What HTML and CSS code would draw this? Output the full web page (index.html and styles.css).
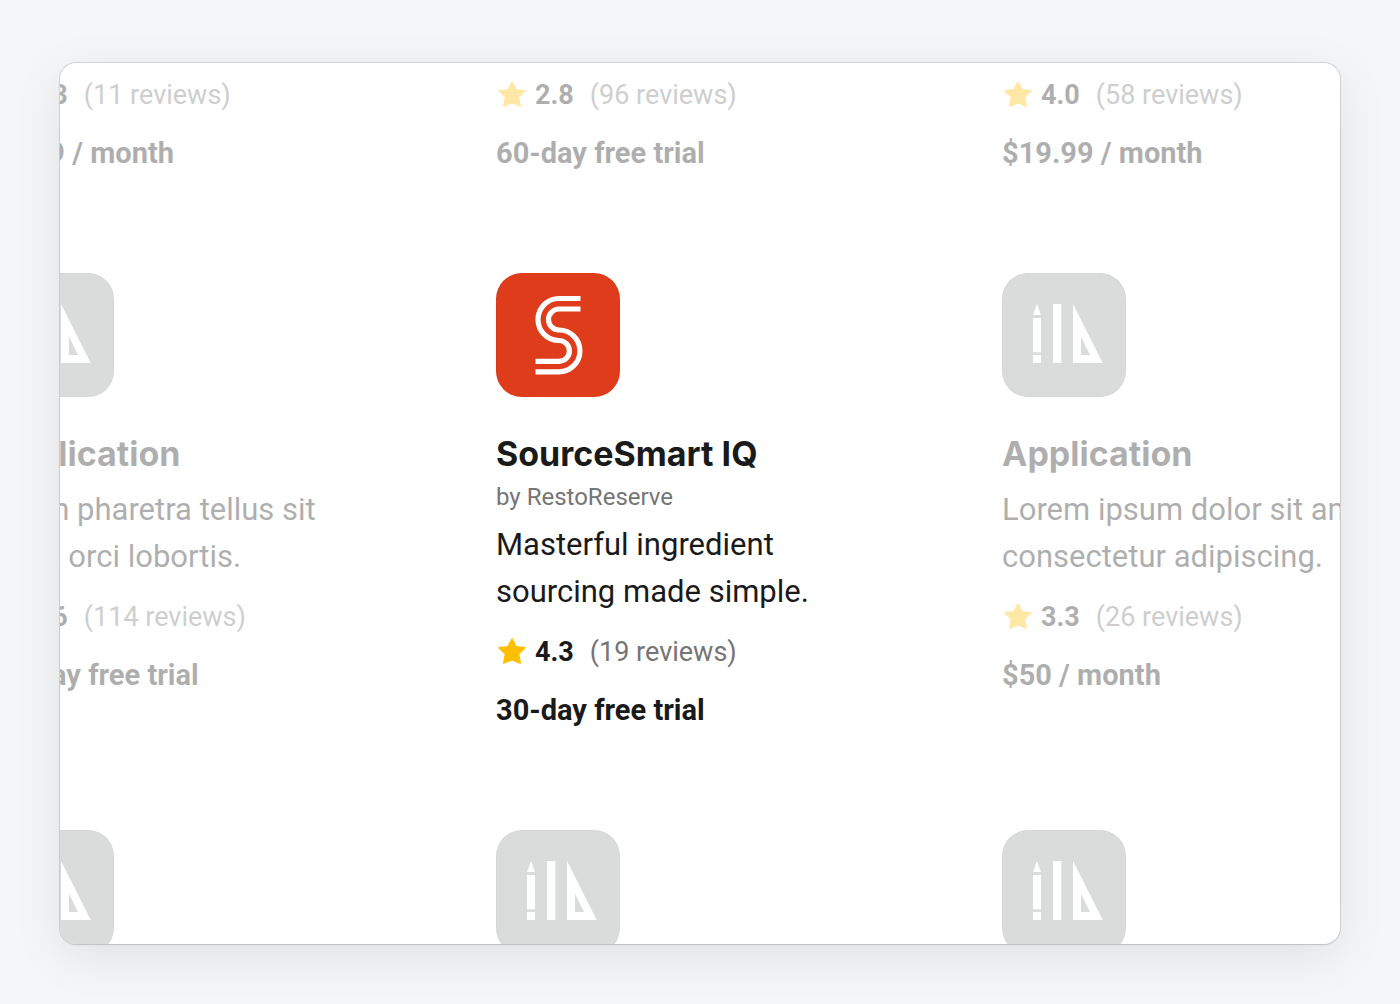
FILE: index.html
```html
<!DOCTYPE html>
<html lang="en">
<head>
<meta charset="utf-8">
<meta name="viewport" content="width=device-width, initial-scale=1">
<title>SourceSmart IQ</title>
<link rel="stylesheet" href="styles.css">
</head>
<body>
<svg class="defs" aria-hidden="true">
  <symbol id="star" viewBox="0 0 28 26">
    <path d="M14 1l3.900 7.700 9 1.200-6.500 6.100 1.800 9-8.200-3.300-8.200 3.300 1.800-9-6.500-6.100 9-1.200z" fill="currentColor" stroke="currentColor" stroke-width="1.600" stroke-linejoin="round"/>
  </symbol>
  <symbol id="tools" viewBox="0 0 124 124">
    <path fill="#fff" fill-rule="evenodd" d="M35 31l4 11h-8zM31 45h8v34.300h-8zM31 82h8v8h-8zM51 31h8.300v59H51zM71 31l29.700 59H71zM79 63.700V82h9z"/>
  </symbol>
</svg>
<main class="frame">
  <div class="grid">
    <article class="card dim">
      <div class="body">
        <p class="rating"><svg class="star"><use href="#star"/></svg><b>4.3</b><span>(11 reviews)</span></p>
        <p class="price">$9.99 / month</p>
      </div>
    </article>
    <article class="card dim">
      <div class="body">
        <p class="rating"><svg class="star"><use href="#star"/></svg><b>2.8</b><span>(96 reviews)</span></p>
        <p class="price">60-day free trial</p>
      </div>
    </article>
    <article class="card dim">
      <div class="body">
        <p class="rating"><svg class="star"><use href="#star"/></svg><b>4.0</b><span>(58 reviews)</span></p>
        <p class="price">$19.99 / month</p>
      </div>
    </article>

    <article class="card dim">
      <svg class="tile"><use href="#tools"/></svg>
      <div class="body">
        <h2>Application</h2>
        <p class="desc">Etiam pharetra tellus sit<br>amet orci lobortis.</p>
        <p class="rating"><svg class="star"><use href="#star"/></svg><b>4.6</b><span>(114 reviews)</span></p>
        <p class="price">14-day free trial</p>
      </div>
    </article>
    <article class="card">
      <svg class="tile brand" viewBox="0 0 124 124">
        <g fill="none" stroke="#fff" stroke-width="5.200">
          <path d="M84.500 25.500H63a21 21 0 0 0 0 42a10.400 10.400 0 0 1 0 20.800H39.500"/>
          <path d="M84.500 36H63a10.500 10.500 0 0 0 0 21a20.900 20.900 0 0 1 0 41.800H39.500"/>
        </g>
      </svg>
      <div class="body">
        <h2>SourceSmart IQ</h2>
        <p class="by">by RestoReserve</p>
        <p class="desc">Masterful ingredient<br>sourcing made simple.</p>
        <p class="rating"><svg class="star"><use href="#star"/></svg><b>4.3</b><span>(19 reviews)</span></p>
        <p class="price">30-day free trial</p>
      </div>
    </article>
    <article class="card dim">
      <svg class="tile"><use href="#tools"/></svg>
      <div class="body">
        <h2>Application</h2>
        <p class="desc">Lorem ipsum dolor sit amet<br>consectetur adipiscing.</p>
        <p class="rating"><svg class="star"><use href="#star"/></svg><b>3.3</b><span>(26 reviews)</span></p>
        <p class="price">$50 / month</p>
      </div>
    </article>

    <article class="card dim"><svg class="tile"><use href="#tools"/></svg></article>
    <article class="card dim"><svg class="tile"><use href="#tools"/></svg></article>
    <article class="card dim"><svg class="tile"><use href="#tools"/></svg></article>
  </div>
</main>
</body>
</html>
```
FILE: styles.css
```css
* {
  box-sizing: border-box;
}

body {
  margin: 0;
  height: 100vh;
  padding: 63px 60px 60px;
  display: flex;
  background: #f5f6f8;
  color: #1a1a1a;
  font-family: Roboto, "Liberation Sans", sans-serif;
}

h2,
p {
  margin: 0;
}

.defs {
  position: absolute;
  width: 0;
  height: 0;
}

.frame {
  flex: 1;
  min-width: 0;
  overflow: hidden;
  border-radius: 16px;
  background: #fff;
  box-shadow: 0 0 0 1px rgba(0, 0, 0, 0.12), 0 1px 2px rgba(0, 0, 0, 0.06), 0 12px 50px rgba(0, 0, 0, 0.09);
}

/* The grid is wider than the frame, so the outer columns run off its edges. */
.grid {
  display: grid;
  grid-template-columns: repeat(3, 1fr);
  row-gap: 102px;
  column-gap: 106px;
  margin: 0 -62px 0 -70px;
  padding-top: 13px;
}

.dim .body {
  opacity: 0.35;
}

.tile {
  display: block;
  width: 124px;
  height: 124px;
  margin-bottom: 33px;
  border-radius: 26px;
  background: #dadcdb;
  box-shadow: inset 0 0 0 1px rgba(0, 0, 0, 0.02);
}

.brand {
  background: #de3c1a;
}

h2 {
  font-family: Inter, "Liberation Sans", sans-serif;
  font-size: 34px;
  font-weight: 700;
  line-height: 48px;
  white-space: nowrap;
}

.by {
  margin-top: 3px;
  font-size: 24px;
  line-height: 32px;
  color: #757575;
}

.desc {
  margin-top: 8px;
  font-size: 31px;
  line-height: 47px;
  white-space: nowrap;
}

.rating {
  display: flex;
  align-items: center;
  font-size: 27px;
  line-height: 38px;
}

.desc + .rating {
  margin-top: 18px;
}

.rating span {
  margin-left: 16px;
  color: #757575;
}

.rating b,
.price {
  font-weight: 700;
}

.star {
  width: 28px;
  height: 26px;
  margin: 0 9px 2px 2px;
  color: #ffbf00;
}

.price {
  margin-top: 21px;
  font-size: 29px;
  line-height: 36px;
}
```
